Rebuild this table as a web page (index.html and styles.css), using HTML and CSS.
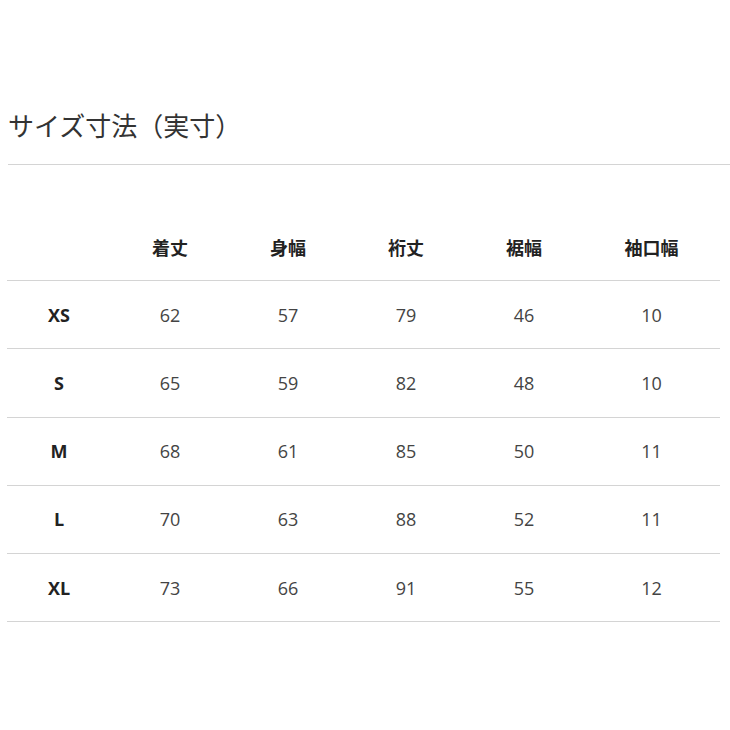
FILE: index.html
```html
<!DOCTYPE html>
<html lang="ja">
<head>
<meta charset="utf-8">
<link rel="stylesheet" href="styles.css">
</head>
<body>
<div class="page">
  <h2 class="title">サイズ寸法（実寸）</h2>
  <table class="size-table">
    <thead>
      <tr><th></th><th>着丈</th><th>身幅</th><th>裄丈</th><th>裾幅</th><th>袖口幅</th></tr>
    </thead>
    <tbody>
      <tr><th>XS</th><td>62</td><td>57</td><td>79</td><td>46</td><td>10</td></tr>
      <tr><th>S</th><td>65</td><td>59</td><td>82</td><td>48</td><td>10</td></tr>
      <tr><th>M</th><td>68</td><td>61</td><td>85</td><td>50</td><td>11</td></tr>
      <tr><th>L</th><td>70</td><td>63</td><td>88</td><td>52</td><td>11</td></tr>
      <tr><th>XL</th><td>73</td><td>66</td><td>91</td><td>55</td><td>12</td></tr>
    </tbody>
  </table>
</div>
</body>
</html>
```
FILE: styles.css
```css
html, body {
  margin: 0;
  padding: 0;
  background: #fff;
}
.page {
  padding: 107px 0 0 8px;
  font-family: "Open Sans", "Noto Sans CJK JP", sans-serif;
  color: #333;
}
.title {
  margin: 0;
  font-family: "Noto Sans CJK JP", sans-serif;
  font-weight: 400;
  font-size: 26px;
  line-height: 36px;
  padding-bottom: 21px;
  border-bottom: 1px solid #d4d4d4;
  color: #333;
}
.size-table {
  margin: 48px 0 0 -1px;
  width: 713px;
  border-collapse: collapse;
  table-layout: fixed;
}
.size-table th, .size-table td {
  height: 67.2px;
  padding: 0;
  text-align: center;
  vertical-align: middle;
  border-bottom: 1px solid #d4d4d4;
  font-size: 18px;
}
.size-table th {
  font-family: "Open Sans", "Noto Sans CJK JP", sans-serif;
  font-weight: 700;
  color: #222;
}
.size-table thead th {
  font-family: "Noto Sans CJK JP", sans-serif;
  font-size: 18px;
}
.size-table td {
  font-weight: 400;
  color: #444;
}
.size-table th:nth-child(1) { width: 104px; }
.size-table th:nth-child(2),
.size-table th:nth-child(3),
.size-table th:nth-child(4),
.size-table th:nth-child(5) { width: 118px; }
```
